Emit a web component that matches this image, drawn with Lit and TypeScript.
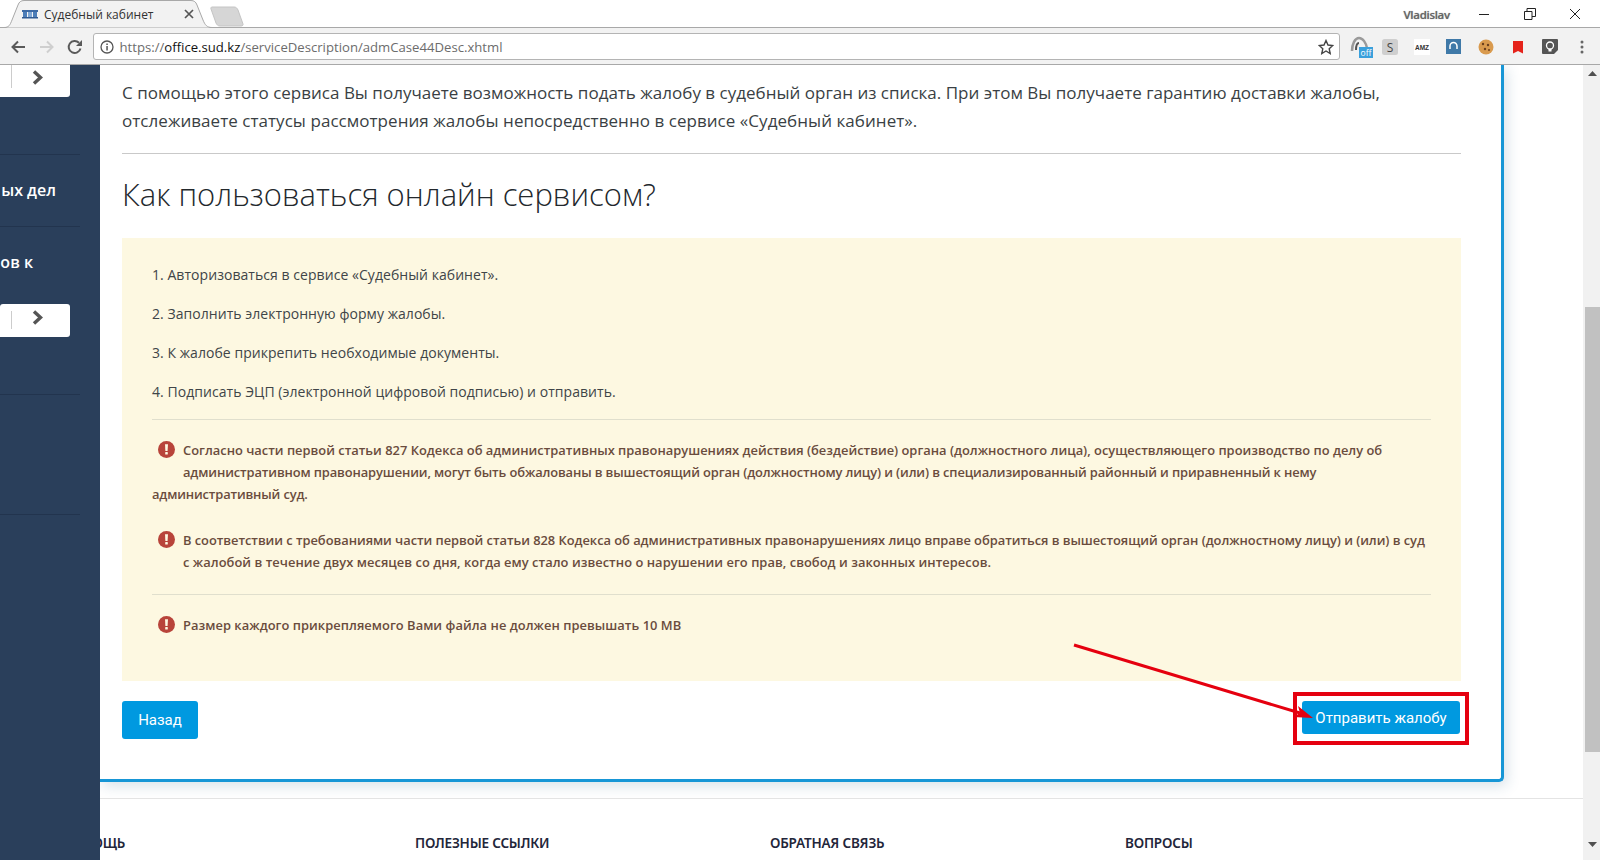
import { LitElement, html, css } from "lit";
import { customElement } from "lit/decorators.js";

const warnIcon = html`<svg class="warn-ic" width="17" height="17" viewBox="0 0 17 17"><circle cx="8.5" cy="8.5" r="8.5" fill="#b8443a"/><path d="M7 3.2h3l-.4 6.8H7.4z" fill="#fdf8e1"/><rect x="7.2" y="11" width="2.6" height="2.6" rx=".6" fill="#fdf8e1"/></svg>`;
const chevron = html`<svg class="chev" width="11" height="15" viewBox="0 0 11 15"><path d="M2 1.500 8.500 7.500 2 13.500" fill="none" stroke="#555" stroke-width="3.400"/></svg>`;

@customElement("app-root")
export class AppRoot extends LitElement {
  static styles = css`
    :host { display: block; width: 1600px; height: 860px; overflow: hidden; position: relative; background: #fff; font-family: "Open Sans", "Noto Sans", sans-serif; }
    .tabstrip { height: 28px; display: flex; background: #fff; position: relative; box-sizing: border-box; border-bottom: 1px solid #a8a8a8; }
    .tab { position: relative; width: 208px; height: 28px; margin-left: 4px; display: flex; align-items: center; z-index: 1; font-size: 12px; color: #333; }
    .tab-bg { position: absolute; left: 0; top: 0; }
    .tab-fav { position: relative; margin-left: 18px; }
    .tab-title { position: relative; margin-left: 6px; width: 140px; white-space: nowrap; }
    .tab-x { position: relative; }
    .newtab { margin-left: -3px; margin-top: 6px; }
    .winctl { margin-left: auto; display: flex; align-items: center; height: 27px; padding-right: 2px; }
    .user { font-size: 11.5px; font-weight: 600; color: #666; width: 58px; text-shadow: 0 0 1px #999; letter-spacing: -.3px; margin-top: 2px; }
    .wbtn { width: 45.5px; display: flex; justify-content: center; }
    .toolbar { height: 37px; box-sizing: border-box; background: #f2f2f2; border-bottom: 1px solid #a8a8a8; display: flex; align-items: center; padding: 1px 0 0 10px; }
    .nav { width: 28.5px; flex: none; display: flex; }
    .url { width: 1247px; height: 27px; flex: none; box-sizing: border-box; background: #fff; border: 1px solid #b4b4b4; border-radius: 3px; display: flex; align-items: center; padding: 0 5px 0 6px; font-size: 13.15px; color: #6c6c6c; margin-left: -3px; }
    .url b { font-weight: 400; color: #111; }
    .url .addr { margin-left: 6px; flex: 1; white-space: nowrap; }
    .exts { display: flex; align-items: center; padding-left: 10px; }
    .ext { width: 32px; flex: none; display: flex; justify-content: flex-start; }
    .ext.dots { width: 10px; padding-left: 6px; box-sizing: border-box; }

    .page { display: flex; height: 795px; position: relative; overflow: hidden; }
    .side { width: 100px; flex: none; background: #2a3f5b; position: relative; z-index: 2; color: #fff; font-weight: 600; font-size: 16px; }
    .mini { width: 70px; height: 32px; background: #fff; border-radius: 0 0 3px 0; box-sizing: border-box; display: flex; align-items: flex-start; }
    .mini.second { height: 33px; border-radius: 3px 3px 3px 0; padding-top: 7px; }
    .mini i { display: block; width: 1px; height: 23px; background: #ccc; margin-left: 11px; }
    .mini.second i { height: 18px; }
    .mini .chev { margin: 5px 0 0 20px; }
    .mini.second .chev { margin-top: -1px; }
    .rule { width: 80px; height: 1px; background: #22344e; }
    .stext { width: 56px; height: 22px; line-height: 22px; text-align: right; white-space: nowrap; }
    .main { flex: 1; min-width: 0; display: flex; }
    .col { width: 1483px; flex: none; }
    .card { width: 1404px; box-sizing: border-box; height: 717px; padding: 14px 40px 0 22px; background: #fff; border-right: 3px solid #1796d6; border-bottom: 3px solid #1796d6; border-radius: 0 0 5px 0; box-shadow: 3px 4px 14px rgba(40, 90, 130, .18); }
    .lead { margin: 0; font-size: 17px; line-height: 27.5px; color: #3a3f44; white-space: nowrap; letter-spacing: .01px; }
    .lead span { letter-spacing: .05px; }
    .hr { height: 1px; background: #c9c9c9; margin-top: 19px; }
    h2 { margin: 19px 0 0; font-weight: 300; font-size: 31px; line-height: 42px; color: #23282d; white-space: nowrap; }
    .note { margin-top: 23px; height: 443px; box-sizing: border-box; background: #fdf8e1; padding: 26px 30px 0; color: #404548; font-size: 14px; letter-spacing: .05px; }
    .step { line-height: 22px; margin-bottom: 17px; white-space: nowrap; }
    .nhr { height: 1px; background: #e0dfcd; margin-top: -1px; }
    .warn { font-size: 12.9px; line-height: 22px; font-weight: 600; color: #6a4c3d; white-space: nowrap; margin-top: 19px; letter-spacing: 0; }
    .warn.next { margin-top: 24px; }
    .warn.last { margin-top: 19px; letter-spacing: .04px; }
    .warn-wrap { float: left; width: 31px; height: 44px; }
    .warn-ic { display: block; margin: 2px 0 0 6px; }
    .warn.last .warn-wrap { height: 22px; }
    .narrow { letter-spacing: -.12px; }
    .narrower { letter-spacing: -.15px; }
    .wide { letter-spacing: -.045px; }
    .wider { letter-spacing: .04px; }
    .acts { display: flex; justify-content: space-between; align-items: flex-start; margin-top: 20px; padding-right: 1px; }
    .btn { background: #0099e0; color: #fff; border: none; border-radius: 3px; font-family: "Roboto", sans-serif; font-size: 15px; font-weight: 400; padding: 0; display: flex; align-items: center; justify-content: center; }
    .btn.back { width: 76px; height: 38px; }
    .btn.send { width: 158px; height: 33px; }
    .foot { margin-top: 16px; border-top: 1px solid #e4e4e4; padding-top: 34px; display: flex; }
    .foot div { width: 355px; flex: none; font-family: "Noto Sans", sans-serif; font-size: 13.5px; font-weight: 600; letter-spacing: -.2px; color: #23263a; line-height: 20px; white-space: nowrap; }
    .foot div:first-child { margin-left: -40px; }
    .scroll { width: 17px; flex: none; background: #f1f1f1; box-sizing: border-box; padding-left: 2px; display: flex; flex-direction: column; align-items: center; }
    .thumb { width: 15px; height: 445px; background: #c1c1c1; margin-top: 231px; }
    .sa { margin-top: 6px; }
    .sb { margin-top: 90px; }
    .redbox { position: absolute; left: 1293px; top: 692px; width: 176px; height: 53px; box-sizing: border-box; border: 4px solid #e5000f; pointer-events: none; z-index: 3; }
    .arrow { position: absolute; left: 0; top: 0; z-index: 3; pointer-events: none; }
  `;

  render() {
    return html`
      <div class="tabstrip">
        <div class="tab">
          <svg class="tab-bg" width="208" height="28" viewBox="0 0 208 28"><path d="M0 27.500C5 27.500 6 25 8 20L14 5C15 2 17 .5 20 .5H187C190 .5 192 2 193 5L199 20C201 25 203 27.500 208 27.500" fill="#f2f2f2" stroke="#a8a8a8"/></svg>
          <svg class="tab-fav" width="16" height="10" viewBox="0 0 16 10"><rect y="1" width="16" height="2" fill="#3d6aa5"/><rect x="1" y="3" width="4" height="6" fill="#4c7db8"/><rect x="6" y="3" width="4" height="6" fill="#7ea6d4"/><rect x="11" y="3" width="4" height="6" fill="#4c7db8"/><rect y="8" width="16" height="1.500" fill="#2f5a93"/></svg>
          <span class="tab-title">Судебный кабинет</span>
          <svg class="tab-x" width="10" height="10" viewBox="0 0 10 10"><path d="M1 1l8 8M9 1l-8 8" stroke="#555" stroke-width="1.700"/></svg>
        </div>
        <svg class="newtab" width="36" height="21" viewBox="0 0 36 21"><path d="M3 1h22c2 0 3 1 4 3l5 14c.4 1-.4 2-2 2H11c-2 0-3-1-4-3L2 3C1.600 2 2 1 3 1z" fill="#d6d6d6" stroke="#c4c4c4"/></svg>
        <div class="winctl">
          <span class="user">Vladislav</span>
          <span class="wbtn"><svg width="12" height="12" viewBox="0 0 12 12"><path d="M1 6.500h10" stroke="#222" stroke-width="1"/></svg></span>
          <span class="wbtn"><svg width="12" height="12" viewBox="0 0 12 12"><path d="M.5 3.500h7.500v8H.5zM3 3.500V.5h8.500v8H8" fill="none" stroke="#222"/></svg></span>
          <span class="wbtn"><svg width="12" height="12" viewBox="0 0 12 12"><path d="M1 1l10 10M11 1L1 11" stroke="#222" stroke-width="1"/></svg></span>
        </div>
      </div>
      <div class="toolbar">
        <span class="nav"><svg width="16" height="16" viewBox="0 0 16 16"><path d="M15 8H3M8 2.500 2.500 8 8 13.500" fill="none" stroke="#5a5a5a" stroke-width="2"/></svg></span>
        <span class="nav"><svg width="16" height="16" viewBox="0 0 16 16"><path d="M1 8h12M8 2.500 13.500 8 8 13.500" fill="none" stroke="#cfcfcf" stroke-width="2"/></svg></span>
        <span class="nav"><svg width="16" height="16" viewBox="0 0 16 16"><path d="M13.500 9.500A6 6 0 1 1 12 3.800" fill="none" stroke="#5a5a5a" stroke-width="2"/><path d="M15 1v6H9z" fill="#5a5a5a"/></svg></span>
        <div class="url">
          <svg width="14" height="14" viewBox="0 0 14 14"><circle cx="7" cy="7" r="6" fill="none" stroke="#555" stroke-width="1.300"/><rect x="6.300" y="6" width="1.500" height="4.500" fill="#555"/><rect x="6.300" y="3.500" width="1.500" height="1.500" fill="#555"/></svg>
          <span class="addr">https://<b>office.sud.kz</b>/serviceDescription/admCase44Desc.xhtml</span>
          <svg width="16" height="16" viewBox="0 0 16 16"><path d="M8 1.500l2 4.500 4.800.5-3.600 3.200 1 4.800L8 12l-4.200 2.500 1-4.800L1.200 6.500 6 6z" fill="none" stroke="#444" stroke-width="1.400"/></svg>
        </div>
        <div class="exts">
          <span class="ext"><svg width="24" height="24" viewBox="0 0 24 24"><path d="M2 16C2 9 5 3 9 3c4 0 7 5 8 10" fill="none" stroke="#9a9a9a" stroke-width="2.500"/><path d="M6 15c0-4 1-7 3-7" fill="none" stroke="#555" stroke-width="2"/><rect x="9" y="12" width="14" height="11" fill="#3aa0dc"/><text x="16" y="21" font-size="8.500" fill="#fff" text-anchor="middle" font-family="Open Sans">off</text></svg></span>
          <span class="ext"><svg width="16" height="16" viewBox="0 0 16 16"><rect width="16" height="16" rx="2.500" fill="#cfcfcf"/><text x="8" y="12.500" font-size="12" fill="#444" text-anchor="middle" font-family="Open Sans">S</text></svg></span>
          <span class="ext"><svg width="16" height="16" viewBox="0 0 16 16"><rect width="16" height="16" fill="#fff"/><text x="8" y="10.500" font-size="6.500" font-weight="700" fill="#333" text-anchor="middle" font-family="Liberation Sans">AMZ</text></svg></span>
          <span class="ext"><svg width="15" height="15" viewBox="0 0 15 15"><rect width="15" height="15" fill="#3f79a8"/><path d="M4 10V7a3.500 3.500 0 0 1 7 0v3" fill="none" stroke="#fff" stroke-width="1.500"/></svg></span>
          <span class="ext"><svg width="16" height="16" viewBox="0 0 16 16"><circle cx="8" cy="8" r="7.500" fill="#d99a4e"/><circle cx="5" cy="5" r="1.200" fill="#6b3f1d"/><circle cx="10" cy="6" r="1.200" fill="#6b3f1d"/><circle cx="7" cy="10" r="1.200" fill="#6b3f1d"/><circle cx="11" cy="11" r="1" fill="#6b3f1d"/></svg></span>
          <span class="ext"><svg width="16" height="16" viewBox="0 0 16 16"><path d="M3 2h10v12.500l-5-2.500-5 2.500z" fill="#e5231b"/></svg></span>
          <span class="ext"><svg width="16" height="16" viewBox="0 0 16 16"><path d="M1 0h14a1 1 0 0 1 1 1v10l-4 4H1a1 1 0 0 1-1-1V1a1 1 0 0 1 1-1z" fill="#555"/><circle cx="8" cy="6.500" r="3.500" fill="none" stroke="#fff" stroke-width="1.300"/><rect x="6.500" y="10" width="3" height="2.500" fill="#fff"/></svg></span>
          <span class="ext dots"><svg width="4" height="14" viewBox="0 0 4 14"><circle cx="2" cy="2" r="1.500" fill="#666"/><circle cx="2" cy="7" r="1.500" fill="#666"/><circle cx="2" cy="12" r="1.500" fill="#666"/></svg></span>
        </div>
      </div>
      <div class="page">
        <aside class="side">
          <div class="mini"><i></i>${chevron}</div>
          <div class="rule" style="margin-top:57px"></div>
          <div class="stext" style="margin-top:24px">ых дел</div>
          <div class="rule" style="margin-top:25px"></div>
          <div class="stext" style="margin-top:24px;width:33px">ов к</div>
          <div class="mini second" style="margin-top:31px"><i></i>${chevron}</div>
          <div class="rule" style="margin-top:57px"></div>
          <div class="rule" style="margin-top:119px"></div>
        </aside>
        <div class="main">
          <div class="col">
            <section class="card">
              <p class="lead">С помощью этого сервиса Вы получаете возможность подать жалобу в судебный орган из списка. При этом Вы получаете гарантию доставки жалобы,<br><span>отслеживаете статусы рассмотрения жалобы непосредственно в сервисе «Судебный кабинет».</span></p>
              <div class="hr"></div>
              <h2>Как пользоваться онлайн сервисом?</h2>
              <div class="note">
                <div class="step">1. Авторизоваться в сервисе «Судебный кабинет».</div>
                <div class="step">2. Заполнить электронную форму жалобы.</div>
                <div class="step">3. К жалобе прикрепить необходимые документы.</div>
                <div class="step">4. Подписать ЭЦП (электронной цифровой подписью) и отправить.</div>
                <div class="nhr"></div>
                <div class="warn"><span class="warn-wrap">${warnIcon}</span>Согласно части первой статьи 827 Кодекса об административных правонарушениях действия (бездействие) органа (должностного лица), осуществляющего производство по делу об<br><span class="narrow">административном правонарушении, могут быть обжалованы в вышестоящий орган (должностному лицу) и (или) в специализированный районный и приравненный к нему</span><br><span class="narrower">административный суд.</span></div>
                <div class="warn next"><span class="warn-wrap">${warnIcon}</span><span class="wide">В соответствии с требованиями части первой статьи 828 Кодекса об административных правонарушениях лицо вправе обратиться в вышестоящий орган (должностному лицу) и (или) в суд</span><br><span class="wider">с жалобой в течение двух месяцев со дня, когда ему стало известно о нарушении его прав, свобод и законных интересов.</span></div>
                <div class="nhr" style="margin-top:21px"></div>
                <div class="warn last"><span class="warn-wrap">${warnIcon}</span>Размер каждого прикрепляемого Вами файла не должен превышать 10 MB</div>
              </div>
              <div class="acts">
                <button class="btn back">Назад</button>
                <button class="btn send">Отправить жалобу</button>
              </div>
            </section>
            <footer class="foot">
              <div>ПОМОЩЬ</div>
              <div>ПОЛЕЗНЫЕ ССЫЛКИ</div>
              <div>ОБРАТНАЯ СВЯЗЬ</div>
              <div>ВОПРОСЫ</div>
            </footer>
          </div>
          <div class="scroll">
            <svg class="sa" width="9" height="5" viewBox="0 0 9 5"><path d="M4.500 0 9 5H0z" fill="#505050"/></svg>
            <div class="thumb"></div>
            <svg class="sb" width="9" height="5" viewBox="0 0 9 5"><path d="M0 0h9L4.500 5z" fill="#505050"/></svg>
          </div>
        </div>
      </div>
      <div class="redbox"></div>
      <svg class="arrow" width="1600" height="860" viewBox="0 0 1600 860">
        <path d="M1074 645 1300 713" stroke="#e5000f" stroke-width="3" fill="none"/>
        <path d="M1313 718 1298 706 1300 713 1293 717z" fill="#e5000f"/>
      </svg>
    `;
  }
}
